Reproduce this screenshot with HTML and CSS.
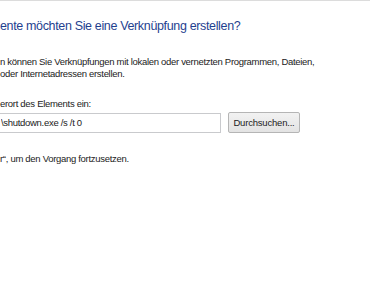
FILE: index.html
```html
<html>
<head>
    <title>Verknüpfung erstellen</title>
    <link rel="stylesheet" href="styles.css">
</head>
<body>
    <div class="wizard">
        <h1 class="main-instruction">ente möchten Sie eine Verknüpfung erstellen?</h1>

        <p class="intro">n können Sie Verknüpfungen mit lokalen oder vernetzten Programmen, Dateien,<br>oder Internetadressen erstellen.</p>

        <!-- Location field -->
        <label class="field-label" for="location">erort des Elements ein:</label>
        <div class="field-row">
            <input type="text" id="location" class="location-input" value="\shutdown.exe /s /t 0">
            <button type="button" class="browse-btn">Durchsuchen...</button>
        </div>

        <p class="hint">r“, um den Vorgang fortzusetzen.</p>
    </div>
</body>
</html>
```

FILE: styles.css
```css
body {
    margin: 0;
    background-color: #ffffff;
    font-family: 'Liberation Sans', Arial, sans-serif;
    font-size: 9.5px;
    letter-spacing: -0.3px; /* Segoe UI is narrower than Arial */
    color: #222;
    overflow: hidden;
}

.wizard {
    border-top: 1px solid #dcdcdc; /* window edge */
    padding-top: 17px;
}

.main-instruction {
    font-size: 12.5px;
    letter-spacing: -0.35px;
    font-weight: normal;
    color: #1f3f8f; /* Windows instruction blue */
    margin: 0 0 22px 0;
    line-height: 16px;
    white-space: nowrap;
}

.intro {
    margin: 0 0 18px 0;
    line-height: 12px;
    white-space: nowrap;
}

.field-label {
    display: block;
    line-height: 12px;
    margin-bottom: 2px;
}

.field-row {
    display: flex;
    align-items: center;
    gap: 7px;
}

.location-input {
    width: 221px;
    height: 20px;
    box-sizing: border-box;
    border: 1px solid #c9cacd;
    border-left: none;
    padding: 0 0 0 1px;
    font-family: inherit;
    font-size: 9.5px;
    letter-spacing: -0.3px;
    color: #222;
    outline: none;
}

.browse-btn {
    width: 72px;
    height: 21px;
    box-sizing: border-box;
    border: 1px solid #b5b5b5;
    border-radius: 2px;
    background: linear-gradient(to bottom, #f2f2f2, #e3e3e3);
    font-family: inherit;
    font-size: 9.5px;
    letter-spacing: -0.2px;
    color: #222;
    padding: 0;
}

.hint {
    margin: 20px 0 0 0;
    line-height: 12px;
}
```
